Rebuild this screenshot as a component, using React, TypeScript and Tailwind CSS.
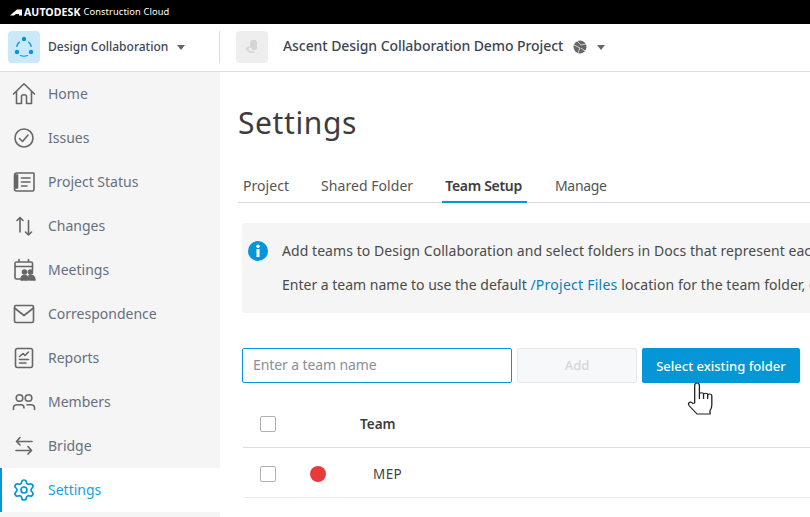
import React from "react";
import { Settings } from "lucide-react";

function Ic({ children }: { children: React.ReactNode }) {
  return (
    <svg width="24" height="24" viewBox="0 0 24 24" fill="none" stroke="currentColor" strokeWidth="1.6" strokeLinecap="round" strokeLinejoin="round">
      {children}
    </svg>
  );
}

const nav: { label: string; icon: React.ReactNode }[] = [
  { label: "Home", icon: <Ic><path d="M1.500 12 12 1.800 22.500 12M4.500 9.500V21.500H9.500V14.500Q9.500 12.800 12 12.800T14.500 14.500V21.500H19.500V9.500" /></Ic> },
  { label: "Issues", icon: <Ic><circle cx="12" cy="12" r="9" /><path d="m7.500 12.500 3 3 5.500-6.500" /></Ic> },
  { label: "Project Status", icon: <Ic><path d="M5 3H21.500Q22 3 22 4V19.500Q22 21 20.500 21H4.500Q2.500 21 2.500 19V5.500Q2.500 3 5 3Z" /><path d="M3 5H5.500V18H3Z" fill="currentColor" /><path d="M9.500 8H18M9.500 12H18M9.500 16H15" /></Ic> },
  { label: "Changes", icon: <Ic><path d="M8 18V3.500M5 6.500 8 3.500 11 6.500M16.500 6.500V21M13.500 18 16.500 21 19.500 18" /></Ic> },
  { label: "Meetings", icon: <Ic><path d="M10 21H4.500Q3 21 3 19.500V5.500Q3 4 4.500 4H19Q20.500 4 20.500 5.500V12M3 8.500H20.500M7 1.500V4M16.500 1.500V4" /><circle cx="12.500" cy="14" r="2" fill="currentColor" /><circle cx="18.500" cy="14" r="2" fill="currentColor" /><path d="M9 22Q9 17.500 12.500 17.500T16 22ZM17 17.500Q22.500 16.500 23 22H17.500Z" fill="currentColor" /></Ic> },
  { label: "Correspondence", icon: <Ic><rect x="2.500" y="3.500" width="19" height="17" rx="1.500" /><path d="m2.500 6 9.500 7.500L21.500 6" /></Ic> },
  { label: "Reports", icon: <Ic><rect x="3.500" y="2.500" width="17" height="19" rx="2" /><path d="m7.500 10.500 3.500-3 2 2 3.500-3.500M7.500 13.500H16.500M7.500 17H14" /></Ic> },
  { label: "Members", icon: <Ic><circle cx="7.500" cy="8" r="3.300" /><circle cx="16.500" cy="8" r="3.300" /><path d="M1.500 19.500V18Q1.500 14.800 5 14.800H9Q12 14.800 12 18M15 14.800H19Q22.500 14.800 22.500 18V19.500" /></Ic> },
  { label: "Bridge", icon: <Ic><path d="M20 7.500H4.500M8 3.500 4.500 7.500 8 11M4 16.500H19.500M16 12.500 19.500 16.500 16 20" /></Ic> },
  { label: "Settings", icon: <Settings size={24} strokeWidth={1.7} /> },
];

export default function App() {
  return (
    <div className="w-[810px] h-[517px] overflow-hidden bg-white flex flex-col text-[14px] text-[#3c3c3c] font-['Noto_Sans','Open_Sans',sans-serif]">
      <div className="h-[24px] bg-black shrink-0 flex items-center pl-[10px] text-white gap-[2px]">
        <svg width="12" height="7" viewBox="0 0 12 7" fill="white"><path d="M0 6.500 7 .5H12V6.500H9V5H6L4 6.500Z" /></svg>
        <span className="font-['Liberation_Sans',sans-serif] font-bold text-[10.500px] leading-none tracking-[0.1px]">AUTODESK</span>
        <span className="text-[9.300px] leading-none ml-[1px] tracking-[0.1px]">Construction Cloud</span>
      </div>

      <div className="h-[48px] shrink-0 flex items-center border-b border-[#dcdcdc] pb-[1px]">
        <div className="w-[220px] h-[32px] flex items-center pl-[8px] border-r border-[#dcdcdc]">
          <div className="w-[32px] h-[32px] rounded-[4px] bg-[#c9e8f8] flex items-center justify-center">
            <svg width="24" height="24" viewBox="0 0 24 24" fill="#0696d7">
              <circle cx="12" cy="4" r="2.200" /><circle cx="5" cy="17" r="2.200" /><circle cx="19" cy="17" r="2.200" />
              <path d="M4.800 11.500Q5.500 8.500 7.500 7M19.200 11.500Q18.500 8.500 16.500 7M8.500 20.500Q12 22 15.500 20.500" stroke="#0696d7" strokeWidth="1.200" fill="none" strokeLinecap="round" />
            </svg>
          </div>
          <span className="ml-[8px] text-[12px] font-medium text-[#3c4654]">Design Collaboration</span>
          <span className="ml-[9px] mt-[1px] w-0 h-0 border-x-[4.500px] border-x-transparent border-t-[5px] border-t-[#666]" />
        </div>
        <div className="ml-[16px] w-[32px] h-[32px] rounded-[4px] bg-[#eeeeee] flex items-center justify-center">
          <svg width="20" height="20" viewBox="0 0 20 20" fill="#d4d4d4"><path d="M10 3Q14 2 15 5V11Q14 14 11 13L8 10V6Q8 4 10 3Z" /><path d="M7 9 3.500 12 8 16H12.500V14.500H8.500L6 12 8 10.500Z" /></svg>
        </div>
        <span className="ml-[15px] -mt-[4px] text-[14px] font-medium tracking-[-0.07px] text-[#3c4654]">Ascent Design Collaboration Demo Project</span>
        <svg className="ml-[10px]" width="14" height="14" viewBox="0 0 14 14"><circle cx="7" cy="7" r="6.500" fill="#666" /><path d="M1 5 7 8 5 13M4 1 8 5 13 4M8 8 12 11" stroke="#ddd" strokeWidth="0.900" fill="none" /></svg>
        <span className="ml-[10px] w-0 h-0 border-x-[4.500px] border-x-transparent border-t-[5px] border-t-[#666]" />
      </div>

      <div className="flex flex-1 min-h-0">
        <aside className="w-[220px] shrink-0 bg-[#f5f5f5]">
          {nav.map((n) => {
            const active = n.label === "Settings";
            return (
              <div
                key={n.label}
                className={
                  active
                    ? "h-[44px] flex items-center bg-white border-l-2 border-[#0696d7] pl-[10px] text-[#0696d7]"
                    : "h-[44px] flex items-center pl-[10px] ml-[2px] text-[#666666]"
                }
              >
                {n.icon}
                <span className={active ? "ml-[12px] -mt-[2px] text-[14px] text-[#1a9fdc]" : "ml-[12px] -mt-[2px] text-[14px] text-[#66707e]"}>{n.label}</span>
              </div>
            );
          })}
        </aside>

        <main className="flex-1 min-w-0 overflow-hidden pl-[18px] pt-[30px]">
          <h1 className="text-[30px] leading-[42px] tracking-[0.6px] text-[#3c3c3c]">Settings</h1>

          <div className="mt-[22px] h-[37px] flex items-stretch border-b border-[#dcdcdc] pl-[2px] text-[14px] tracking-[0.05px] text-[#555]">
            <div className="px-[3px] pt-[9px] mr-[26px]">Project</div>
            <div className="px-[3px] pt-[9px] mr-[26px]">Shared Folder</div>
            <div className="pl-[3px] pr-[5px] pt-[9px] mr-[25px] -mb-px border-b-2 border-[#0696d7] font-semibold text-[#3c3c3c] tracking-[-0.3px]">Team Setup</div>
            <div className="px-[3px] pt-[9px] tracking-[-0.3px]">Manage</div>
          </div>

          <div className="mt-[20px] ml-[4px] h-[90px] w-[700px] rounded-l-[4px] bg-[#f5f5f5] pl-[6px] pt-[16px] flex">
            <svg className="mt-[2px] shrink-0" width="20" height="20" viewBox="0 0 20 20">
              <circle cx="10" cy="10" r="10" fill="#0696d7" />
              <circle cx="10" cy="5.200" r="1.700" fill="white" />
              <rect x="8.500" y="8" width="3" height="8" fill="white" />
            </svg>
            <div className="ml-[14px] text-[14px] whitespace-nowrap text-[#4a4a4a]">
              <div className="leading-[24px] tracking-[0.06px]">Add teams to Design Collaboration and select folders in Docs that represent each team.</div>
              <div className="leading-[24px] mt-[10px]">
                Enter a team name to use the default <span className="text-[#0b7fb8] tracking-[0.25px]">/Project Files</span><span className="tracking-[0.06px]"> location for the team folder, or select an existing folder.</span>
              </div>
            </div>
          </div>

          <div className="mt-[35px] ml-[4px] flex gap-[5px] items-stretch h-[35px] relative">
            <input
              readOnly
              placeholder="Enter a team name"
              className="w-[270px] h-[35px] rounded-[2px] border border-[#0696d7] pl-[10px] pr-[11px] pb-[2px] text-[14px] tracking-[-0.1px] outline-none placeholder:text-[#8a8f96]"
            />
            <div className="w-[120px] rounded-[2px] border border-[#e8e8e8] bg-[#f7f8fa] flex items-center justify-center pt-[1px] text-[13px] font-medium text-[#d4d6da]">Add</div>
            <div className="w-[158px] rounded-[2px] bg-[#0696d7] flex items-center justify-center pt-[2px] text-[13px] font-medium text-white">Select existing folder</div>
            <svg className="absolute left-[445px] top-[34px]" width="26" height="33" viewBox="1 0 22 33" preserveAspectRatio="none" fill="white" stroke="#222" strokeWidth="1.100" strokeLinejoin="round">
              <path d="M7.500 21V3.500Q7.500 1 9.500 1T11.500 3.500V12Q11.500 10.800 13.300 10.800T15 12.500Q15 11.300 16.800 11.300T18.500 13Q18.500 12 20.200 12T22 14V23Q22 26 20.500 28.500V32H9.500L3 24Q1.500 21.500 3 20.500T6 21.500Z" />
              <path d="M11.500 12V17M15 12.500V17M18.500 13V17" fill="none" />
            </svg>
          </div>

          <div className="mt-[18px] ml-[5px] h-[47px] flex items-center border-b border-[#dcdcdc]">
            <span className="ml-[17px] w-[16px] h-[16px] rounded-[2px] border border-[#b0b0b0] bg-white shrink-0" />
            <span className="ml-[84px] text-[13.500px] font-semibold text-[#3c3c3c]">Team</span>
          </div>
          <div className="ml-[5px] h-[50px] pt-[3px] flex items-center border-b border-[#ebebeb]">
            <span className="ml-[17px] w-[16px] h-[16px] rounded-[2px] border border-[#b0b0b0] bg-white shrink-0" />
            <span className="ml-[34px] w-[16px] h-[16px] rounded-full bg-[#e83a3a] shrink-0" />
            <span className="ml-[47px] text-[13.500px] tracking-[0.4px] text-[#444]">MEP</span>
          </div>
        </main>
      </div>
    </div>
  );
}
